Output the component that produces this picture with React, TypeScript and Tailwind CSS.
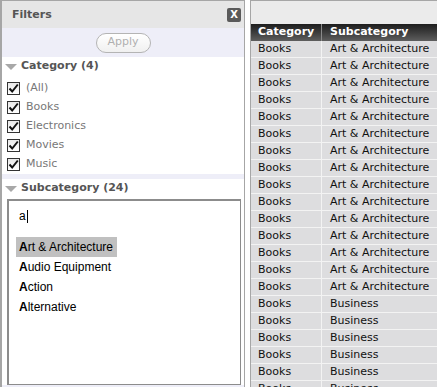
import React from 'react';

const categories = ['(All)', 'Books', 'Electronics', 'Movies', 'Music'];
const matches = ['Art & Architecture', 'Audio Equipment', 'Action', 'Alternative'];

const rows = [
  ...Array.from({ length: 15 }, () => ['Books', 'Art & Architecture']),
  ...Array.from({ length: 6 }, () => ['Books', 'Business']),
];

function Triangle() {
  return (
    <svg width="12" height="8" viewBox="0 0 12 8" className="shrink-0">
      <polygon points="0,1 12,1 6,7" fill="#a8a8a8" />
    </svg>
  );
}

function CheckBox() {
  return (
    <div className="w-[13px] h-[13px] shrink-0 border border-[#333] bg-gradient-to-b from-[#e8e8e8] to-white flex items-center justify-center">
      <svg width="11" height="11" viewBox="0 0 11 11">
        <path d="M1.5 5.5 L4.2 8.5 L9.8 1.5" stroke="#111" strokeWidth="2" fill="none" />
      </svg>
    </div>
  );
}

function SectionHeader({ label }: { label: string }) {
  return (
    <div className="h-[19px] shrink-0 flex items-center gap-[4px] pl-[3px] text-[11px] font-bold text-[#555]">
      <Triangle />
      <span>{label}</span>
    </div>
  );
}

function FilterPanel() {
  return (
    <div className="w-[245px] h-full flex flex-col border-l-2 border-r border-t border-[#a6a6a6] bg-white">
      <div className="h-[27px] shrink-0 bg-[#e6e6e6] flex items-center justify-between pl-[10px] pr-[3px] pt-[1px]">
        <span className="text-[11px] font-bold text-[#555]">Filters</span>
        <div className="w-[14px] h-[14px] bg-[#5a5a5a] rounded-[2px] flex items-center justify-center text-white text-[10px] font-bold leading-none">
          X
        </div>
      </div>
      <div className="h-[29px] shrink-0 bg-[#eeeef8] flex items-center justify-center">
        <div className="w-[55px] h-[20px] rounded-full border border-[#b4b4b4] bg-gradient-to-b from-white to-[#f0f0f0] flex items-center justify-center text-[11px] text-[#b0b0b0]">
          Apply
        </div>
      </div>
      <SectionHeader label="Category (4)" />
      <div className="flex flex-col pt-[3px]">
        {categories.map((c) => (
          <div key={c} className="h-[19px] flex items-center gap-[6px] pl-[5px] text-[11px] text-[#777]">
            <CheckBox />
            <span>{c}</span>
          </div>
        ))}
      </div>
      <div className="h-[5px] shrink-0 bg-[#eeeef8]" />
      <SectionHeader label="Subcategory (24)" />
      <div className="flex-1 flex flex-col">
        <div className="ml-[5px] mr-[3px] mt-[1px] h-[186px] border border-[#8c8c8c] border-l-2 border-t-2 bg-white pl-[7px] pt-[7px] font-['Liberation_Sans',sans-serif] text-[12px] text-black">
          <div className="h-[16px] pl-[3px] flex items-center">
            <span>a</span>
            <span className="w-px h-[13px] bg-black ml-[1px]" />
          </div>
          <div className="mt-[13px] flex flex-col items-start">
            {matches.map((m, i) => (
              <div
                key={m}
                className={`h-[20px] pl-[3px] pr-[4px] flex items-center ${i === 0 ? 'bg-[#c0c0c0]' : ''}`}
              >
                <b>{m[0]}</b>
                <span>{m.slice(1)}</span>
              </div>
            ))}
          </div>
        </div>
        <div className="flex-1 bg-[#eeeef8]" />
      </div>
    </div>
  );
}

function DataTable() {
  return (
    <div className="flex-1 h-full flex flex-col border-l border-t border-[#a6a6a6] bg-white overflow-hidden">
      <div className="h-[23px] shrink-0 bg-[#ebebeb]" />
      <div className="h-[17px] shrink-0 flex bg-gradient-to-b from-[#1e1e1e] to-[#5e5e5e] text-white text-[11px] font-bold">
        <div className="w-[71px] pl-[7px] flex items-center border-r border-[#8a8a8a]">Category</div>
        <div className="flex-1 pl-[8px] flex items-center">Subcategory</div>
      </div>
      {rows.map((r, i) => (
        <div key={i} className="h-[17px] shrink-0 flex bg-[#dddddf] border-b border-[#f3f3f3] text-[11px] text-[#111]">
          <div className="w-[71px] pl-[7px] flex items-center border-r border-[#f3f3f3]">{r[0]}</div>
          <div className="flex-1 pl-[8px] flex items-center">{r[1]}</div>
        </div>
      ))}
    </div>
  );
}

export default function App() {
  return (
    <div className="w-[437px] h-[387px] flex gap-[5px] overflow-hidden bg-white font-['DejaVu_Sans',sans-serif]">
      <FilterPanel />
      <DataTable />
    </div>
  );
}
